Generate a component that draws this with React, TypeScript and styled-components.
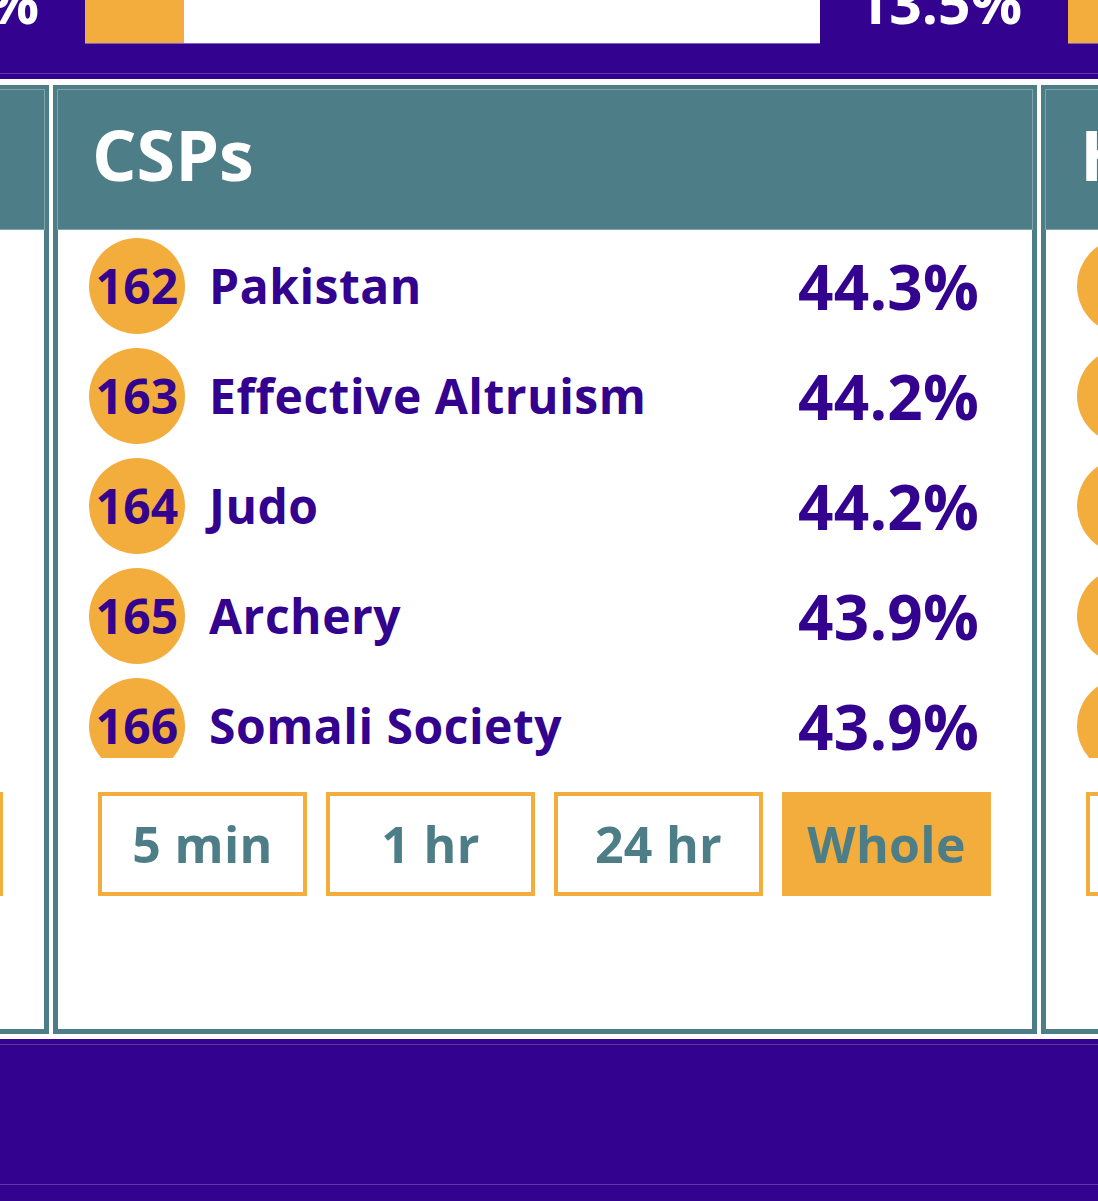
import React from "react";
import styled, { createGlobalStyle } from "styled-components";

const PURPLE = "#330390";
const TEAL = "#4d7e88";
const ORANGE = "#f2ad3c";

const GlobalStyle = createGlobalStyle`
  html, body {
    margin: 0;
    padding: 0;
    background: #ffffff;
    overflow: hidden;
    font-family: "Open Sans", "Noto Sans", sans-serif;
  }
  * { box-sizing: border-box; }
`;

const Page = styled.div`
  width: 1098px;
  display: flex;
  flex-direction: column;
`;

const TopBand = styled.div`
  height: 79px;
  overflow: hidden;
  background: ${PURPLE};
  box-shadow: inset 0 -5px 0 ${PURPLE}, inset 0 -6px 0 #5b3aa6;
`;

const BandTrack = styled.div`
  display: flex;
  margin-left: -930px;
`;

const StatItem = styled.div`
  flex: 0 0 983px;
  display: flex;
  align-items: flex-start;
  padding: 0 14px 0 32px;
`;

const Bar = styled.div`
  width: 735px;
  height: 43px;
  background: #ffffff;
  display: flex;
  box-shadow: 0 1px 0 #7b61c2;
`;

const BarFill = styled.div`
  height: 100%;
  background: ${ORANGE};
`;

const StatValue = styled.div`
  margin-left: auto;
  margin-top: -26px;
  color: #ffffff;
  font-size: 57px;
  font-weight: 700;
  line-height: 56px;
`;

const Main = styled.div`
  padding: 6px 0 5px;
  overflow: hidden;
  background: #ffffff;
`;

const Track = styled.div`
  display: flex;
  gap: 4px;
  margin-left: -935px;
`;

const Panel = styled.section`
  flex: 0 0 984px;
  height: 949px;
  border: 4px solid ${TEAL};
  display: flex;
  flex-direction: column;
  background: #ffffff;
`;

const Header = styled.h2`
  margin: 0;
  height: 141px;
  flex-shrink: 0;
  background: ${TEAL};
  box-shadow: inset 0 0 0 1px #7fa4ab;
  display: flex;
  align-items: center;
  padding: 0 0 12px 35px;
  color: #ffffff;
  font-size: 70px;
  font-weight: 700;
  line-height: 1;
`;

const Body = styled.div`
  flex: 1;
  display: flex;
  flex-direction: column;
  box-shadow: inset 1px 0 0 ${TEAL}, inset -1px 0 0 ${TEAL}, inset 0 -1px 0 ${TEAL};
`;

const List = styled.ul`
  margin: 0;
  padding: 0;
  list-style: none;
  height: 528px;
  overflow: hidden;
  display: flex;
  flex-direction: column;
`;

const Row = styled.li`
  flex: 0 0 110px;
  display: flex;
  align-items: center;
  padding: 2px 54px 0 32px;
  color: ${PURPLE};
  font-weight: 700;
`;

const Rank = styled.span`
  flex: 0 0 96px;
  height: 96px;
  border-radius: 50%;
  background: ${ORANGE};
  display: flex;
  align-items: center;
  justify-content: center;
  font-size: 48px;
  line-height: 1;
  letter-spacing: 0.2px;
`;

const Name = styled.span`
  flex: 1;
  margin-left: 24px;
  font-size: 48px;
  line-height: 1;
  letter-spacing: 0.5px;
  white-space: nowrap;
`;

const Percent = styled.span`
  font-size: 62px;
  line-height: 1;
  letter-spacing: 0.2px;
`;

const Buttons = styled.div`
  margin-top: 34px;
  padding-left: 41px;
  display: grid;
  grid-template-columns: repeat(4, 209px);
  gap: 19px;
`;

const RangeButton = styled.button<{ $active?: boolean }>`
  height: 104px;
  border: 4px solid ${ORANGE};
  border-radius: 0;
  background: ${(p) => (p.$active ? ORANGE : "#ffffff")};
  color: ${TEAL};
  font-family: "Open Sans", "Noto Sans", sans-serif;
  font-size: 50px;
  font-weight: 700;
  line-height: 1;
  letter-spacing: 0.3px;
  display: flex;
  align-items: center;
  justify-content: center;
  padding: 0;
  cursor: pointer;
`;

const Footer = styled.footer`
  height: 162px;
  background: ${PURPLE};
  padding-top: 5px;
`;

const FooterInner = styled.div`
  height: 141px;
  border-top: 1px solid #5b3aa6;
  border-bottom: 1px solid #5b3aa6;
`;

type Entry = { rank: number; name: string; pct: string };
type PanelData = { title: string; entries: Entry[] };

const stats = [
  { label: "14.1%", pct: 14.1 },
  { label: "13.5%", pct: 13.5 },
  { label: "12.8%", pct: 12.8 },
];

const panels: PanelData[] = [
  {
    title: "Clubs",
    entries: [
      { rank: 160, name: "Chess", pct: "44.6%" },
      { rank: 161, name: "Rowing", pct: "44.4%" },
      { rank: 162, name: "Drama", pct: "44.3%" },
      { rank: 163, name: "Film", pct: "44.1%" },
      { rank: 164, name: "Poetry", pct: "44.0%" },
    ],
  },
  {
    title: "CSPs",
    entries: [
      { rank: 162, name: "Pakistan", pct: "44.3%" },
      { rank: 163, name: "Effective Altruism", pct: "44.2%" },
      { rank: 164, name: "Judo", pct: "44.2%" },
      { rank: 165, name: "Archery", pct: "43.9%" },
      { rank: 166, name: "Somali Society", pct: "43.9%" },
    ],
  },
  {
    title: "Halls",
    entries: [
      { rank: 12, name: "Oak", pct: "41.2%" },
      { rank: 13, name: "Elm", pct: "40.9%" },
      { rank: 14, name: "Ash", pct: "40.5%" },
      { rank: 15, name: "Pine", pct: "40.1%" },
      { rank: 16, name: "Birch", pct: "39.8%" },
    ],
  },
];

const ranges = ["5 min", "1 hr", "24 hr", "Whole"];

export default function App() {
  return (
    <Page>
      <GlobalStyle />
      <TopBand>
        <BandTrack>
          {stats.map((s) => (
            <StatItem key={s.label}>
              <Bar>
                <BarFill style={{ width: `${s.pct}%` }} />
              </Bar>
              <StatValue>{s.label}</StatValue>
            </StatItem>
          ))}
        </BandTrack>
      </TopBand>
      <Main>
        <Track>
          {panels.map((p) => (
            <Panel key={p.title}>
              <Header>{p.title}</Header>
              <Body>
                <List>
                  {p.entries.map((e) => (
                    <Row key={e.rank}>
                      <Rank>{e.rank}</Rank>
                      <Name>{e.name}</Name>
                      <Percent>{e.pct}</Percent>
                    </Row>
                  ))}
                </List>
                <Buttons>
                  {ranges.map((r) => (
                    <RangeButton key={r} $active={r === "Whole"}>
                      {r}
                    </RangeButton>
                  ))}
                </Buttons>
              </Body>
            </Panel>
          ))}
        </Track>
      </Main>
      <Footer>
        <FooterInner />
      </Footer>
    </Page>
  );
}
